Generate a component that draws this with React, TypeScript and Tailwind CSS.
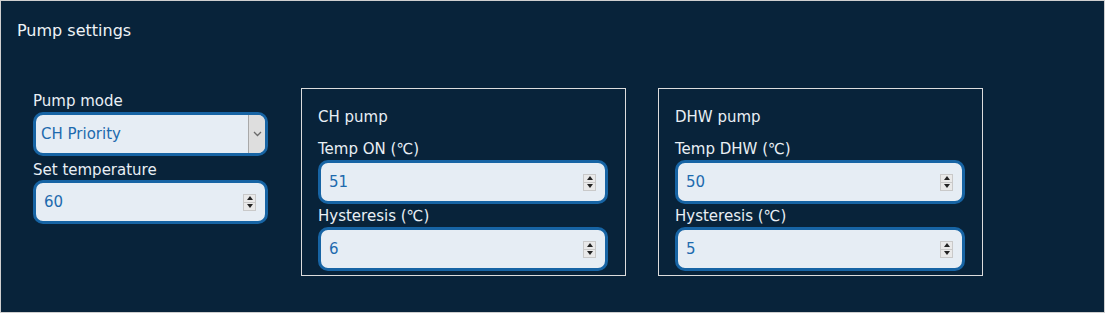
import { ReactNode } from "react";

function Label({ children, className = "" }: { children: ReactNode; className?: string }) {
  return <div className={`text-[15px] leading-[18px] text-[#e9eff5] ${className}`}>{children}</div>;
}

function Spinner() {
  return (
    <div className="flex h-[17px] w-[13px] flex-col border border-[#c9c9c9] bg-[#e9e9e9]">
      <div className="flex flex-1 items-center justify-center border-b border-[#c9c9c9]">
        <svg width="6" height="4" viewBox="0 0 6 4">
          <path d="M0 4 L3 0 L6 4 Z" fill="#222" />
        </svg>
      </div>
      <div className="flex flex-1 items-center justify-center">
        <svg width="6" height="4" viewBox="0 0 6 4">
          <path d="M0 0 L6 0 L3 4 Z" fill="#222" />
        </svg>
      </div>
    </div>
  );
}

function NumberField({ value, width }: { value: string; width: string }) {
  return (
    <div
      className={`flex h-[44px] ${width} items-center justify-between rounded-[10px] border-[3px] border-[#1764a4] bg-[#e6edf4] pl-[8px] pr-[9px]`}
    >
      <span className="text-[15px] text-[#1d6aae]">{value}</span>
      <Spinner />
    </div>
  );
}

function SelectField({ value }: { value: string }) {
  return (
    <div className="flex h-[44px] w-[235px] overflow-hidden rounded-[10px] border-[3px] border-[#1764a4] bg-[#e6edf4]">
      <div className="flex flex-1 items-center pl-[5px] text-[15px] text-[#1d6aae]">{value}</div>
      <div className="flex w-[17px] items-center justify-center border-l border-[#a8a8a8] bg-[#dedede]">
        <svg width="9" height="6" viewBox="0 0 9 6">
          <path d="M1 1 L4.5 4.5 L8 1" fill="none" stroke="#6b6b6b" strokeWidth="1.3" />
        </svg>
      </div>
    </div>
  );
}

function PumpBox({
  title,
  first,
  firstValue,
  secondValue,
}: {
  title: string;
  first: string;
  firstValue: string;
  secondValue: string;
}) {
  return (
    <div className="h-[188px] w-[325px] border border-[#dcdcdc] pl-[16px] pt-[19px]">
      <Label>{title}</Label>
      <Label className="mt-[14px] mb-[2px]">{first}</Label>
      <NumberField value={firstValue} width="w-[290px]" />
      <Label className="mt-[3px] mb-[2px]">Hysteresis (℃)</Label>
      <NumberField value={secondValue} width="w-[290px]" />
    </div>
  );
}

export default function App() {
  return (
    <div
      className="h-[313px] w-[1105px] border border-[#cfcfcf] bg-[#08233a]"
      style={{ fontFamily: '"DejaVu Sans", Verdana, sans-serif' }}
    >
      <div className="pl-[16px] pt-[20px] text-[16px] leading-[20px] text-[#eef3f7]">Pump settings</div>
      <div className="mt-[47px] flex items-start pl-[32px]">
        <div className="w-[235px] pt-[4px]">
          <Label className="mb-[2px]">Pump mode</Label>
          <SelectField value="CH Priority" />
          <Label className="mt-[5px] mb-[1px]">Set temperature</Label>
          <NumberField value="60" width="w-[235px]" />
        </div>
        <div className="ml-[33px]">
          <PumpBox title="CH pump" first="Temp ON (℃)" firstValue="51" secondValue="6" />
        </div>
        <div className="ml-[32px]">
          <PumpBox title="DHW pump" first="Temp DHW (℃)" firstValue="50" secondValue="5" />
        </div>
      </div>
    </div>
  );
}
